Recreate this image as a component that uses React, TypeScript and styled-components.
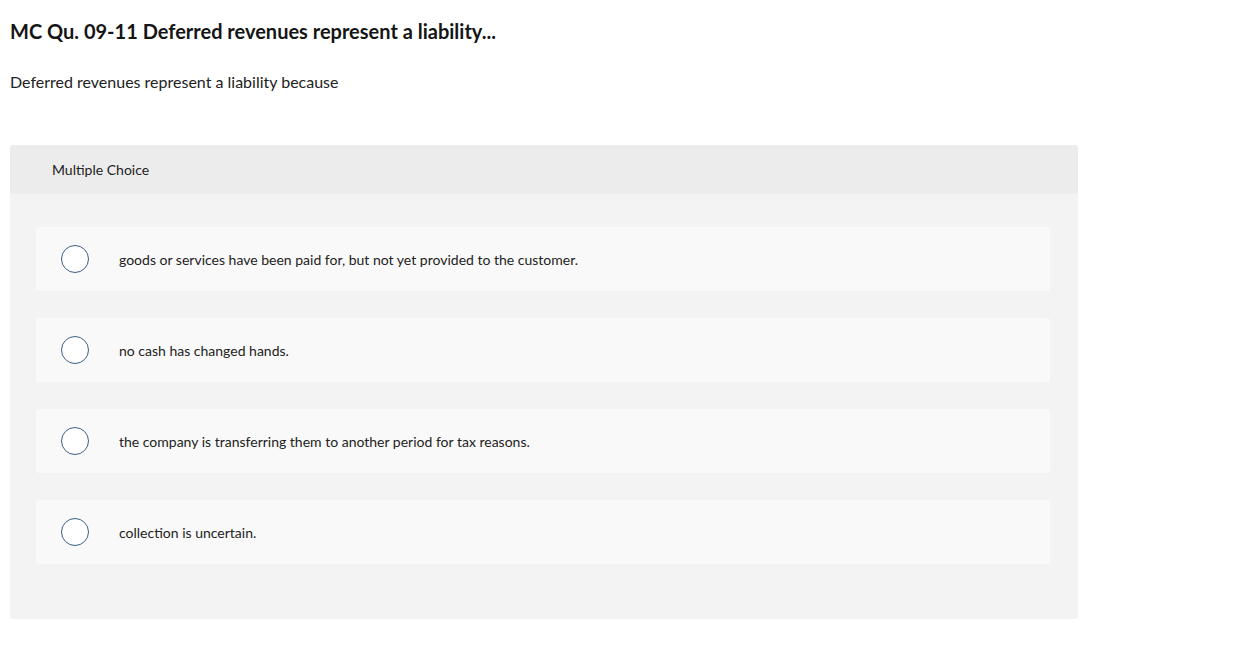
import styled, { createGlobalStyle } from "styled-components";

const GlobalStyle = createGlobalStyle`
  body {
    margin: 0;
    background: #ffffff;
    font-family: Lato, "Open Sans", Arial, sans-serif;
    color: #1b1b1b;
  }
`;

const choices: string[] = [
  "goods or services have been paid for, but not yet provided to the customer.",
  "no cash has changed hands.",
  "the company is transferring them to another period for tax reasons.",
  "collection is uncertain.",
];

export default function App() {
  return (
    <>
      <GlobalStyle />
      <Page>
        <Title>MC Qu. 09-11 Deferred revenues represent a liability...</Title>
        <Prompt>Deferred revenues represent a liability because</Prompt>
        <Panel>
          <PanelHeader>Multiple Choice</PanelHeader>
          <ChoiceList>
            {choices.map((choice: string) => (
              <Choice key={choice}>
                <Radio />
                <span className="label">{choice}</span>
              </Choice>
            ))}
          </ChoiceList>
        </Panel>
      </Page>
    </>
  );
}

const Page = styled.div`
  & {
    padding: 18px 10px 0;
    width: 1068px;
  }
`;

const Title = styled.h1`
  & {
    margin: 0;
    font-size: 20px;
    font-weight: 700;
    line-height: 26px;
    color: #151515;
  }
`;

const Prompt = styled.p`
  & {
    margin: 25px 0 0;
    font-size: 16px;
    line-height: 26px;
    color: #222;
  }
`;

const Panel = styled.div`
  & {
    margin-top: 50px;
    background: #f3f3f3;
    border-radius: 3px;
    overflow: hidden;
  }
`;

const PanelHeader = styled.div`
  & {
    height: 49px;
    display: flex;
    align-items: center;
    padding-left: 42px;
    background: #ececec;
    font-size: 14px;
    color: #222;
  }
`;

const ChoiceList = styled.div`
  & {
    display: flex;
    flex-direction: column;
    gap: 27px;
    padding: 33px 28px 55px 26px;
  }
`;

const Choice = styled.div`
  & {
    display: flex;
    align-items: center;
    height: 64px;
    background: #f9f9f9;
    border-radius: 3px;
    padding-left: 25px;
  }

  .label {
    margin-left: 30px;
    font-size: 14px;
    color: #222;
  }
`;

const Radio = styled.span`
  & {
    box-sizing: border-box;
    width: 28px;
    height: 28px;
    border-radius: 50%;
    border: 1.5px solid #3d5f86;
    background: #ffffff;
  }
`;
